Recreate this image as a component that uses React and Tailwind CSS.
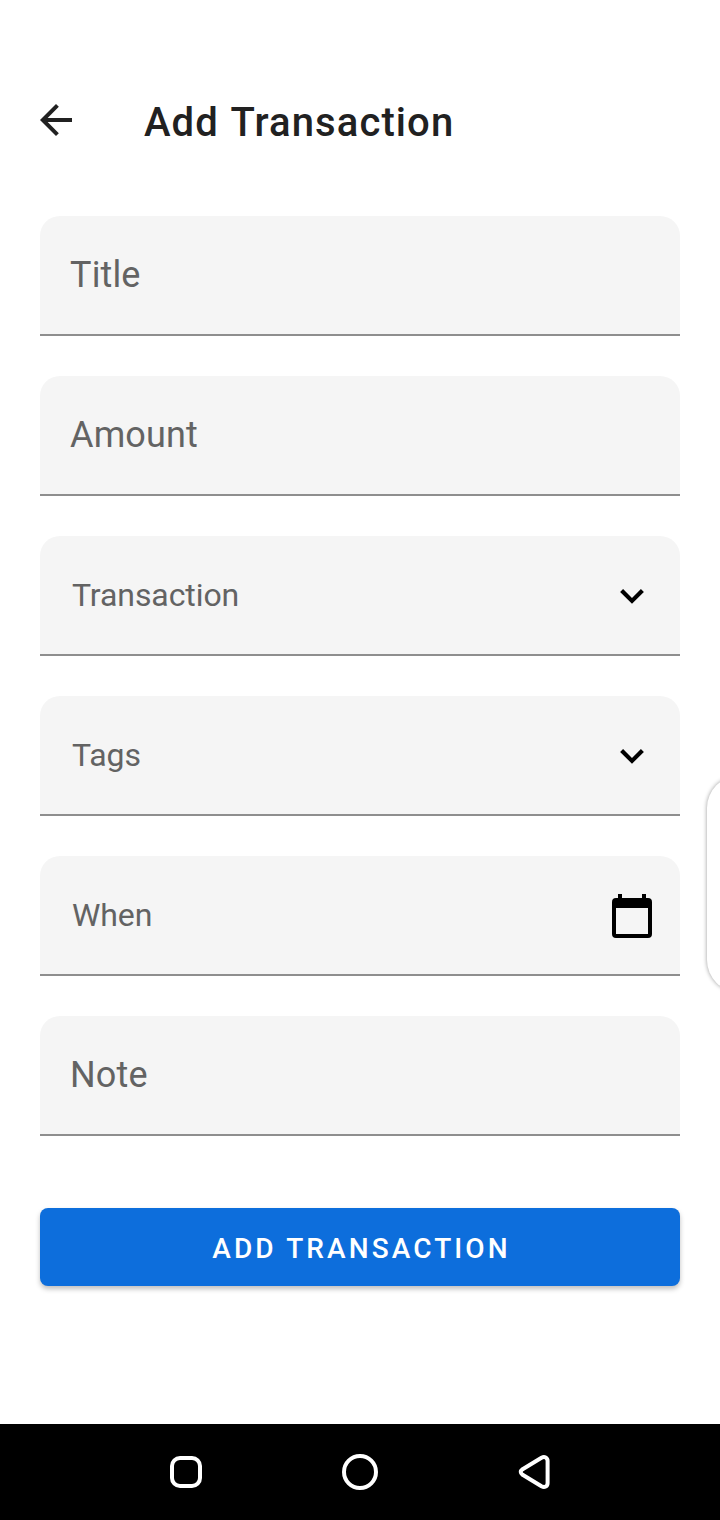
function Field({ label, large, children }) {
  return (
    <div className="flex h-[120px] items-center justify-between rounded-t-[20px] border-b-2 border-[#8e8e8e] bg-[#f5f5f5] pr-7 pl-[30px]">
      <span className={large ? "text-[36px] leading-[42px] tracking-[0.15px] text-[#636363]" : "pl-[2px] text-[32px] leading-[38px] tracking-[-0.08px] text-[#636363]"}>{label}</span>
      {children}
    </div>
  );
}

function Chevron() {
  return (
    <svg className="mt-[2px] mr-2 h-6 w-6" viewBox="0 0 24 24" fill="none" stroke="#000" strokeWidth="4.2">
      <path d="M1.6 6.5 12 16.9l10.4-10.4" />
    </svg>
  );
}

function Calendar() {
  return (
    <svg className="mt-[2px] h-11 w-10" viewBox="0 0 40 44">
      <path fillRule="evenodd" d="M36 4h-2V0h-4v4H10V0H6v4H4a4 4 0 0 0-4 4v32a4 4 0 0 0 4 4h32a4 4 0 0 0 4-4V8a4 4 0 0 0-4-4zm0 36H4V14h32z" />
    </svg>
  );
}

export default function App() {
  return (
    <div className="relative flex h-[1520px] w-[720px] flex-col overflow-hidden bg-white font-['Roboto',sans-serif]">
      <header className="flex h-[216px] items-center px-10 pt-6">
        <svg className="h-8 w-8" viewBox="4 4 16 16" fill="#212121">
          <path d="M20 11H7.83l5.59-5.59L12 4l-8 8 8 8 1.41-1.41L7.83 13H20v-2z" />
        </svg>
        <h1 className="pt-[6px] pl-[72px] text-[40px] leading-[48px] font-medium tracking-[1.1px] text-[#212121] [word-spacing:1.4px]">Add Transaction</h1>
      </header>
      <main className="flex flex-1 flex-col gap-10 px-10">
        <Field label="Title" large />
        <Field label="Amount" large />
        <Field label="Transaction"><Chevron /></Field>
        <Field label="Tags"><Chevron /></Field>
        <Field label="When"><Calendar /></Field>
        <Field label="Note" large />
        <button className="mt-8 h-[78px] rounded-[8px] bg-[#0d6edc] pt-1 pl-[3px] text-[28px] font-medium tracking-[3.1px] text-white shadow-[0_3px_5px_rgba(0,0,0,0.25)]">ADD TRANSACTION</button>
      </main>
      <nav className="flex h-24 items-center bg-black pl-[170px]">
        <svg className="h-8 w-8" viewBox="0 0 32 32" fill="none" stroke="#fff" strokeWidth="4">
          <rect x="2" y="2" width="28" height="28" rx="8" />
        </svg>
        <svg className="ml-[140px] h-9 w-9" viewBox="0 0 36 36" fill="none" stroke="#fff" strokeWidth="4">
          <circle cx="18" cy="18" r="16" />
        </svg>
        <svg className="ml-[140px] h-9 w-8" viewBox="0 0 32 36" fill="none" stroke="#fff" strokeWidth="4" strokeLinejoin="round">
          <path d="M23.5 3.7 4.6 15.2Q.9 18 4.6 20.8L23.5 32.3C26.5 34 29.6 32.5 29.6 29V7C29.6 3.5 26.5 2 23.5 3.7Z" />
        </svg>
      </nav>
      <div className="absolute top-[776px] left-[707px] h-[216px] w-16 rounded-[32px] bg-white shadow-[0_0_4px_rgba(0,0,0,0.4)]" />
    </div>
  );
}
